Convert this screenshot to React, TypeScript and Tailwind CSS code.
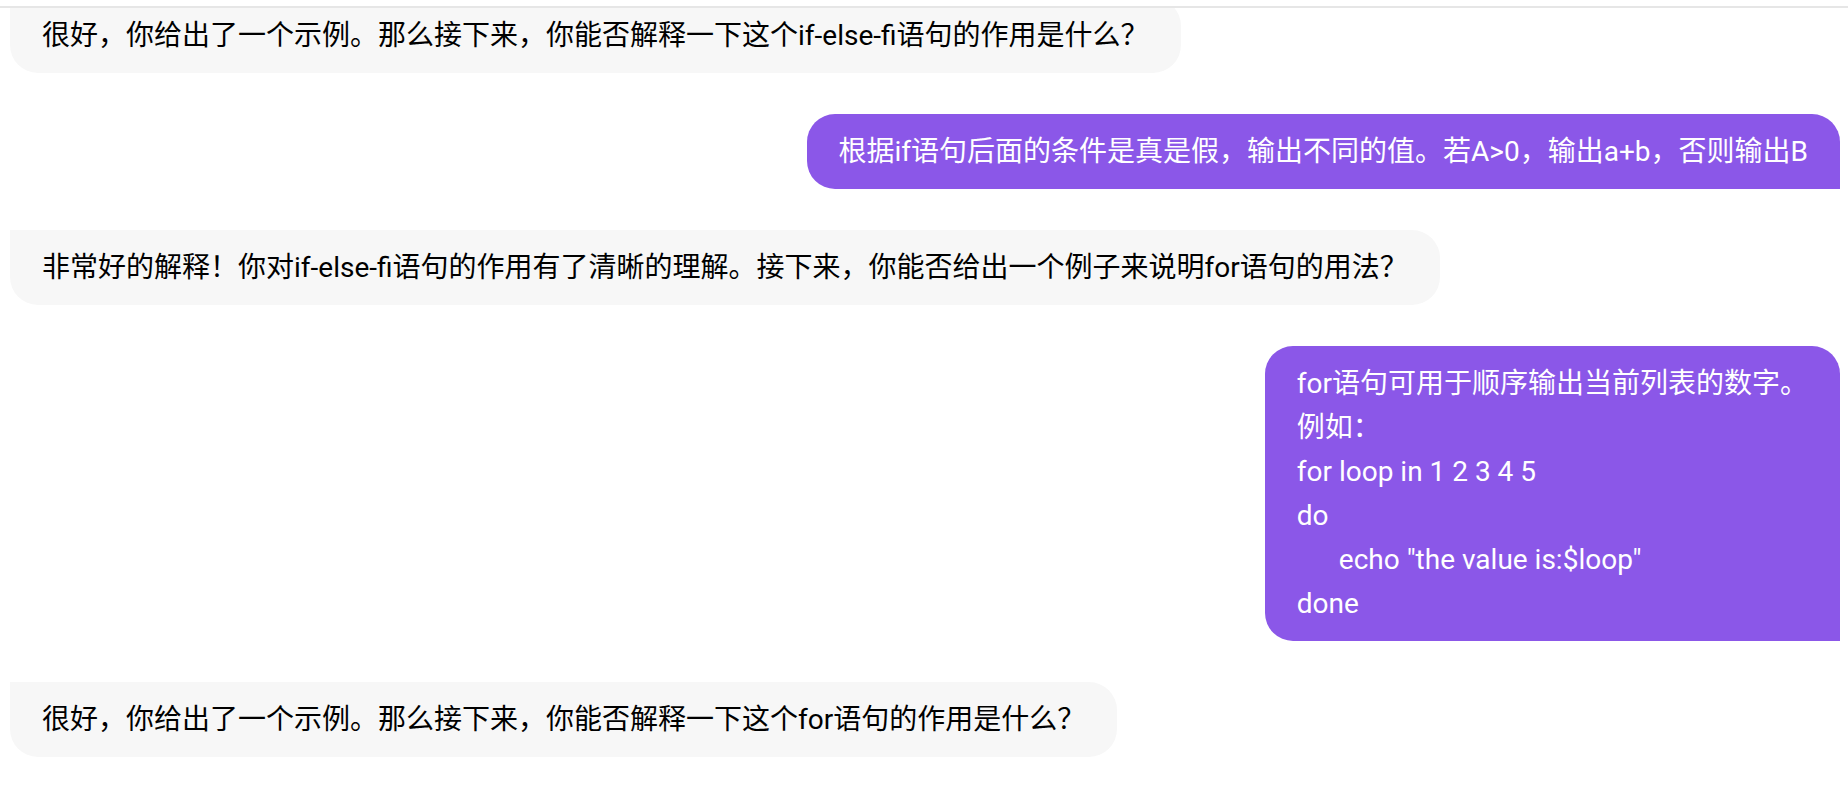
import { useLayoutEffect, useRef } from "react";

type Msg = { from: "bot" | "me"; lines: { text: string; indent?: boolean }[] };

const messages: Msg[] = [
  {
    from: "bot",
    lines: [{ text: "很好，你给出了一个示例。那么接下来，你能否解释一下这个if-else-fi语句的作用是什么？" }],
  },
  {
    from: "me",
    lines: [{ text: "根据if语句后面的条件是真是假，输出不同的值。若A>0，输出a+b，否则输出B" }],
  },
  {
    from: "bot",
    lines: [
      {
        text: "非常好的解释！你对if-else-fi语句的作用有了清晰的理解。接下来，你能否给出一个例子来说明for语句的用法？",
      },
    ],
  },
  {
    from: "me",
    lines: [
      { text: "for语句可用于顺序输出当前列表的数字。" },
      { text: "例如：" },
      { text: "for loop in 1 2 3 4 5" },
      { text: "do" },
      { text: 'echo "the value is:$loop"', indent: true },
      { text: "done" },
    ],
  },
  {
    from: "bot",
    lines: [{ text: "很好，你给出了一个示例。那么接下来，你能否解释一下这个for语句的作用是什么？" }],
  },
];

function Bubble({ msg }: { msg: Msg }) {
  const mine = msg.from === "me";
  return (
    <div
      className={
        mine
          ? "self-end rounded-[28px] rounded-br-none bg-[#8b57e8] px-8 py-[15.5px] text-white"
          : "self-start rounded-[28px] rounded-tl-none bg-[#f7f7f7] px-8 py-[15.5px] text-black"
      }
    >
      {msg.lines.map((l, i) => (
        <p key={i} className={l.indent ? "pl-[42px] whitespace-pre" : "whitespace-pre"}>
          {l.text}
        </p>
      ))}
    </div>
  );
}

export default function App() {
  const listRef = useRef<HTMLDivElement>(null);

  // the chat is scrolled a little, first bubble sits under the header line
  useLayoutEffect(() => {
    if (listRef.current) listRef.current.scrollTop = 10;
  }, []);

  return (
    <div
      className="flex h-[790px] w-full flex-col bg-white text-[28px] leading-[44px]"
      style={{ fontFamily: 'Roboto, "Noto Sans CJK SC", sans-serif' }}
    >
      <div className="h-[6px] shrink-0 border-b-2 border-[#e6e6e6] box-content" />
      <div ref={listRef} className="min-h-0 flex-1 overflow-hidden">
        <div className="flex flex-col gap-[41px] pl-[10px] pr-2 pb-10">
          {messages.map((m, i) => (
            <Bubble key={i} msg={m} />
          ))}
        </div>
      </div>
    </div>
  );
}
